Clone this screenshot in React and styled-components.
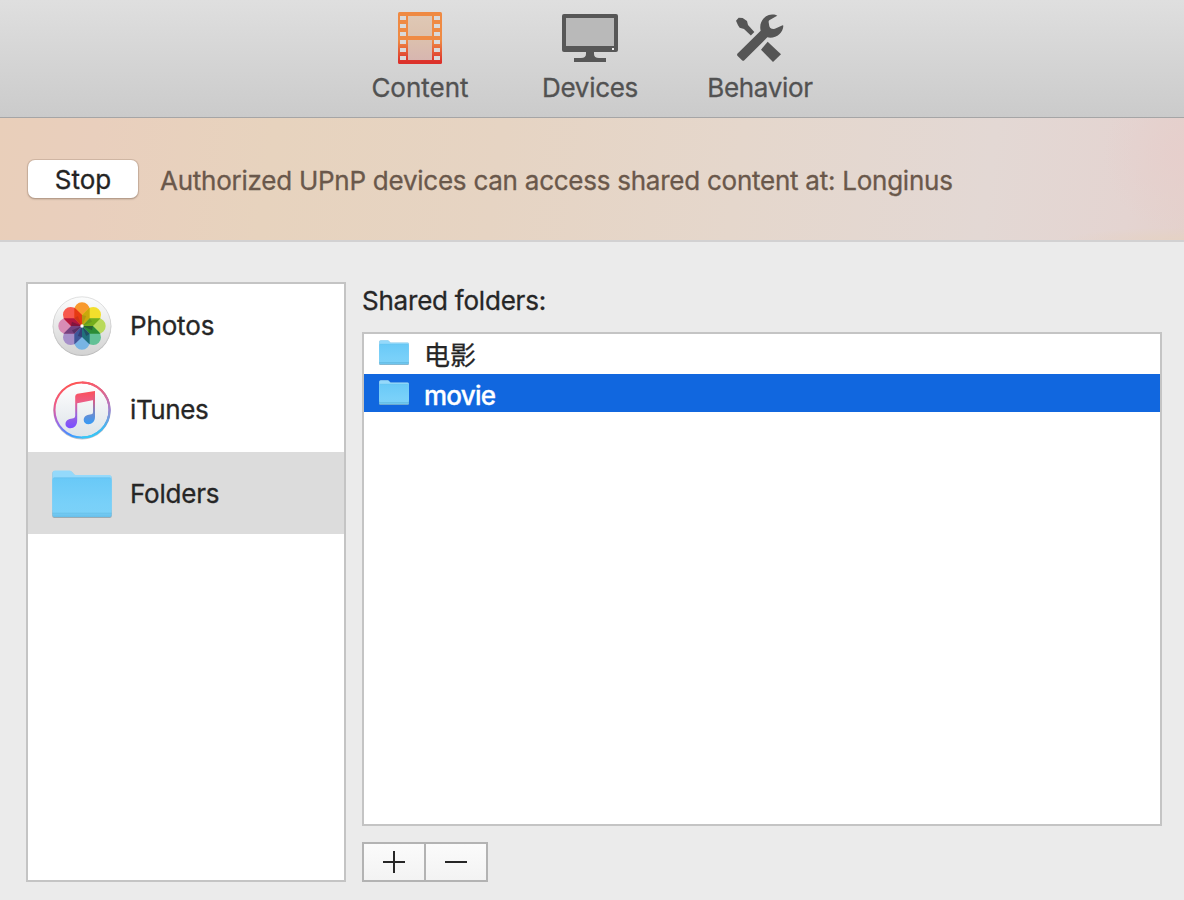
import React from 'react';
import styled, { createGlobalStyle } from 'styled-components';

const GlobalStyle = createGlobalStyle`
  * { box-sizing: border-box; }
  body {
    margin: 0;
    background: #ebebeb;
    font-family: Inter, "Noto Sans CJK SC", sans-serif;
    font-size: 26px;
    font-weight: 400;
    line-height: 32px;
    color: #262626;
    -webkit-text-stroke: 0.3px;
  }
`;

const Window = styled.div`
  width: 1184px;
  height: 900px;
  display: flex;
  flex-direction: column;
  background: #ebebeb;
  overflow: hidden;
`;

const Toolbar = styled.nav`
  height: 118px;
  flex: none;
  display: flex;
  justify-content: center;
  padding-right: 4px;
  border-bottom: 1px solid #a5a5a6;
  background: linear-gradient(#dfdfdf, #cbcbcb);
`;

const Tab = styled.div`
  width: 170px;
  display: flex;
  flex-direction: column;
  align-items: center;
  color: #525252;
`;

const TabIcon = styled.div`
  height: 72px;
  padding-top: ${(p) => p.$top}px;
  svg { display: block; }
`;

const Label = styled.span`
  letter-spacing: ${(p) => p.$track || 0}px;
  white-space: nowrap;
`;

const Banner = styled.section`
  height: 124px;
  flex: none;
  display: flex;
  align-items: center;
  gap: 22px;
  padding: 2px 28px 2px;
  border-bottom: 2px solid #d2d1d2;
  background:
    radial-gradient(circle at 100% 30%, #e6cfcc 0, #e6cfcc00 80px),
    radial-gradient(ellipse at 100% 100%, #e5d2c4 0, #e5d2c400 120px),
    linear-gradient(98deg, #e9cfba 0, #e9cfbd 8%, #e7d3be 23%, #e6d4c3 42%, #e5d7cc 62%, #e3d8d4 83%, #e4d4d1 95%, #e4d1cc 100%);
`;

const BannerText = styled.p`
  margin: 3px 0 0;
  letter-spacing: ${(p) => p.$track}px;
  white-space: nowrap;
  color: #6a584b;
`;

const StopButton = styled.button`
  width: 110px;
  height: 38px;
  padding: 2px 0 0;
  border: 0;
  border-radius: 7px;
  background: #fff;
  box-shadow: 0 0 0 1px #b9a08e80, 0 1px 2px #705b4b99;
  color: #242424;
  font: inherit;
`;

const Content = styled.main`
  flex: 1;
  display: flex;
  gap: 16px;
  padding: 40px 22px 18px 26px;
`;

const Sidebar = styled.aside`
  width: 320px;
  border: 2px solid #c4c4c4;
  background: #fff;
`;

const Source = styled.div`
  height: 82px;
  margin-bottom: 2px;
  padding: 2px 0 0 24px;
  display: flex;
  align-items: center;
  gap: 18px;
  background: ${(p) => (p.$selected ? '#dcdcdc' : 'transparent')};
  svg { flex: none; }
`;

const Detail = styled.section`
  flex: 1;
  display: flex;
  flex-direction: column;
`;

const Heading = styled.div`
  height: 50px;
  padding-top: 3px;
`;

const FolderList = styled.div`
  height: 494px;
  border: 2px solid #c4c4c4;
  background: #fff;
`;

const FolderRow = styled.div`
  height: ${(p) => (p.$selected ? 38 : 40)}px;
  padding-left: 15px;
  display: flex;
  align-items: flex-start;
  gap: 15px;
  background: ${(p) => (p.$selected ? '#1167df' : 'transparent')};
  color: ${(p) => (p.$selected ? '#fff' : '#262626')};
  font-weight: ${(p) => (p.$selected ? 500 : 400)};
  svg { flex: none; margin-top: 6px; }
  span { padding-top: 6px; }
`;

const Actions = styled.div`
  width: 126px;
  height: 40px;
  margin-top: 16px;
  display: flex;
  gap: 2px;
  padding: 2px;
  background: #b3b3b3;
`;

const ActionButton = styled.button`
  flex: 1;
  padding: 0;
  border: 0;
  display: flex;
  align-items: center;
  justify-content: center;
  background: linear-gradient(#fbfbfb, #f3f3f3);
`;

const FilmIcon = () => (
  <svg width="44" height="52" viewBox="0 0 44 52">
    <defs>
      <linearGradient id="film" x1="0" y1="0" x2="0" y2="1">
        <stop offset="0" stopColor="#ef8a43" />
        <stop offset=".55" stopColor="#ef8a43" />
        <stop offset=".95" stopColor="#dc322b" />
      </linearGradient>
      <linearGradient id="frame" x1="0" y1="0" x2="0" y2="1">
        <stop offset="0" stopColor="#dfc8b5" />
        <stop offset=".5" stopColor="#dcc1ad" />
        <stop offset="1" stopColor="#d7b6b0" />
      </linearGradient>
    </defs>
    <rect width="44" height="52" rx="1.5" fill="url(#film)" />
    <path d="M10 4h24v20H10zM10 28h24v20H10z" fill="url(#frame)" />
    {[4, 12, 20, 28, 36, 44].map((y) => (
      <path key={y} d={`M2 ${y}h6v4H2zM36 ${y}h6v4h-6z`} fill="#dadada" />
    ))}
  </svg>
);

const MonitorIcon = () => (
  <svg width="56" height="48" viewBox="0 0 56 48">
    <rect width="56" height="38" rx="2" fill="#575757" />
    <rect x="4" y="4" width="48" height="28" fill="#b9b9b9" />
    <rect x="50" y="34" width="2" height="2" fill="#eee" />
    <path d="M24 38h8v2q0 4 5 4h7v4H12v-4h7q5 0 5-4z" fill="#575757" />
  </svg>
);

const ToolsIcon = () => (
  <svg width="48" height="48" viewBox="108 42 144 144" fill="#555">
    <path d="M112 161 182 92C176 68 191 45 216 43.5c6-.3 12 .5 16 3.5l-3 2-20 11q-4 2-3 7l2 12q1 6 7 7l6 1q4 0 7-2l20-9q2 0 2 2c-1 22-23 39-48 34l-69 69q-3 3-7 0l-13-13q-3-3-1-7Z" />
    <path d="M108 62 116 53.5 128 54 141 63 144 75 163 96 152.500 106.500 132 87 119 83 114 76Z" />
    <path d="m203 125 40 38-24 23-36-37Z" />
  </svg>
);

const petals = [
  { color: '#f8992d', overlap: '#c9a80c' },
  { color: '#f3df2c', overlap: '#74ad1c' },
  { color: '#b9da5c', overlap: '#2c8c35' },
  { color: '#63c196', overlap: '#20707c' },
  { color: '#78b4e4', overlap: '#3f5699' },
  { color: '#a68fc9', overlap: '#74417f' },
  { color: '#d88bb5', overlap: '#b3173f' },
  { color: '#f7594d', overlap: '#e63a12' },
];

const PhotosIcon = () => (
  <svg width="60" height="60" viewBox="0 0 60 60">
    <defs>
      <linearGradient id="disc" x1="0" y1="0" x2="0" y2="1">
        <stop offset="0" stopColor="#fcfdfd" />
        <stop offset="1" stopColor="#d3d3d3" />
      </linearGradient>
    </defs>
    <circle cx="30" cy="30.6" r="29.3" fill="#bbb" />
    <circle cx="30" cy="29.7" r="28.9" fill="url(#disc)" stroke="#d4d4d4" strokeWidth=".7" />
    {petals.map(({ color }, i) => (
      <path
        key={color}
        d="M30 30 22.3 22.3V14a7.7 7.7 0 0 1 15.4 0v8.3Z"
        transform={`rotate(${i * 45} 30 30)`}
        fill={color}
      />
    ))}
    {petals.map(({ overlap }, i) => (
      <path
        key={overlap}
        d="M30 30V19.1L37.7 11.4V22.3Z"
        transform={`rotate(${i * 45} 30 30)`}
        fill={overlap}
      />
    ))}
    {petals.map(({ color }, i) => (
      <path
        key={color}
        d="M30 30V19.1L34.2 19.9Z"
        transform={`rotate(${i * 45} 30 30)`}
        fill="#24103a"
        opacity={i > 1 && i < 7 ? 0.35 : 0.12}
      />
    ))}
    <circle cx="30" cy="30" r="1.7" fill="#fff" />
  </svg>
);

const ITunesIcon = () => (
  <svg width="60" height="60" viewBox="0 0 60 60">
    <defs>
      <linearGradient id="ring" x1=".35" y1="0" x2=".65" y2="1">
        <stop offset="0" stopColor="#ff5553" />
        <stop offset=".28" stopColor="#f05a87" />
        <stop offset=".6" stopColor="#9a68eb" />
        <stop offset=".85" stopColor="#428fff" />
        <stop offset="1" stopColor="#35c4f8" />
      </linearGradient>
      <linearGradient id="ringRight" x1="0" y1="0" x2="0" y2="1">
        <stop offset="0" stopColor="#fa5a67" />
        <stop offset=".4" stopColor="#b878bc" />
        <stop offset=".8" stopColor="#45b8ef" />
        <stop offset="1" stopColor="#35c8f6" />
      </linearGradient>
      <linearGradient id="face" x1="0" y1="0" x2="0" y2="1">
        <stop offset="0" stopColor="#fff" />
        <stop offset="1" stopColor="#dce3e8" />
      </linearGradient>
      <linearGradient id="noteLeft" x1="0" y1="11" x2="0" y2="47" gradientUnits="userSpaceOnUse">
        <stop offset="0" stopColor="#fb5058" />
        <stop offset=".3" stopColor="#ec5d86" />
        <stop offset=".65" stopColor="#9b65db" />
        <stop offset="1" stopColor="#7c50ff" />
      </linearGradient>
      <linearGradient id="noteRight" x1="0" y1="11" x2="0" y2="43" gradientUnits="userSpaceOnUse">
        <stop offset="0" stopColor="#f65560" />
        <stop offset=".35" stopColor="#ce6190" />
        <stop offset=".65" stopColor="#7588c8" />
        <stop offset="1" stopColor="#3999f3" />
      </linearGradient>
    </defs>
    <circle cx="30" cy="30.6" r="28.8" fill="#8b8b9a" opacity=".55" />
    <circle cx="30" cy="30" r="27.5" fill="url(#face)" stroke="url(#ring)" strokeWidth="2" />
    <path d="M30 2.5a27.5 27.5 0 0 1 0 55" fill="none" stroke="url(#ringRight)" strokeWidth="2" />
    <path d="M23.2 16.500q0-2.200 2.200-2.700L43 11v8.800L25.200 23.300v17c0 5.200-3 8-6.700 8-2.800 0-5-1.800-5-4.300 0-3.600 3.200-5.200 6.700-5.500 1.800-.2 3-.8 3-2.800Z" fill="url(#noteLeft)" />
    <path d="M41 16.500 43 11v25.800c0 4.900-3 7.400-6.600 7.400-2.700 0-4.700-1.600-4.700-4.200 0-3.500 2.900-5.200 6.300-5.500 1.800-.2 3-.8 3-2.600Z" fill="url(#noteRight)" />
  </svg>
);

const FolderIcon = ({ width, height }) => (
  <svg width={width} height={height} viewBox="0 0 60 48" preserveAspectRatio="none">
    <defs>
      <linearGradient id="folder" x1="0" y1="0" x2="0" y2="1">
        <stop offset="0" stopColor="#69c9f7" />
        <stop offset=".65" stopColor="#78d0f9" />
        <stop offset=".88" stopColor="#7bd1f8" />
        <stop offset=".9" stopColor="#65bde5" />
        <stop offset=".92" stopColor="#72caf3" />
        <stop offset="1" stopColor="#68bfe9" />
      </linearGradient>
    </defs>
    <path d="M.3 4q0-3 3-3h14q2 0 3.2 1.7L22 4.5q.7 1 2 1H57q2.7 0 2.7 2.5v38q0 2-2 2H2.3q-2 0-2-2Z" fill="#8b9fa9" opacity=".8" />
    <path d="M.3 3.5q0-3 3-3h14q2 0 3.2 1.7L22 4q.7 1 2 1H57q2.7 0 2.7 2.5V40H.3Z" fill="#94d9fb" />
    <path d="M.3 10q0-2.2 2-2.2h55.4q2 0 2 2.2v35q0 2-2 2H2.3q-2 0-2-2Z" fill="url(#folder)" />
    <path d="M1.5 7.8h57" stroke="#61bce8" strokeWidth=".6" />
  </svg>
);

const PlusIcon = () => (
  <svg width="22" height="22" viewBox="0 0 22 22">
    <path d="M0 11h22M11 0v22" stroke="#262626" strokeWidth="2" />
  </svg>
);

const MinusIcon = () => (
  <svg width="22" height="22" viewBox="0 0 22 22">
    <path d="M0 11h22" stroke="#262626" strokeWidth="2" />
  </svg>
);

export default function App() {
  return (
    <>
      <GlobalStyle />
      <Window>
        <Toolbar>
          <Tab><TabIcon $top={12}><FilmIcon /></TabIcon><Label>Content</Label></Tab>
          <Tab><TabIcon $top={14}><MonitorIcon /></TabIcon><Label $track={-0.3}>Devices</Label></Tab>
          <Tab><TabIcon $top={14}><ToolsIcon /></TabIcon><Label $track={-0.3}>Behavior</Label></Tab>
        </Toolbar>
        <Banner>
          <StopButton>Stop</StopButton>
          <BannerText $track={-0.25}>Authorized UPnP devices can access shared content at: Longinus</BannerText>
        </Banner>
        <Content>
          <Sidebar>
            <Source><PhotosIcon /><Label $track={-0.15}>Photos</Label></Source>
            <Source><ITunesIcon /><Label $track={-0.4}>iTunes</Label></Source>
            <Source $selected><FolderIcon width={60} height={48} /><Label $track={-0.2}>Folders</Label></Source>
          </Sidebar>
          <Detail>
            <Heading><Label $track={-0.22}>Shared folders:</Label></Heading>
            <FolderList>
              <FolderRow><FolderIcon width={30} height={25} /><Label>电影</Label></FolderRow>
              <FolderRow $selected><FolderIcon width={30} height={25} /><Label $track={-0.75}>movie</Label></FolderRow>
            </FolderList>
            <Actions>
              <ActionButton aria-label="Add folder"><PlusIcon /></ActionButton>
              <ActionButton aria-label="Remove folder"><MinusIcon /></ActionButton>
            </Actions>
          </Detail>
        </Content>
      </Window>
    </>
  );
}
